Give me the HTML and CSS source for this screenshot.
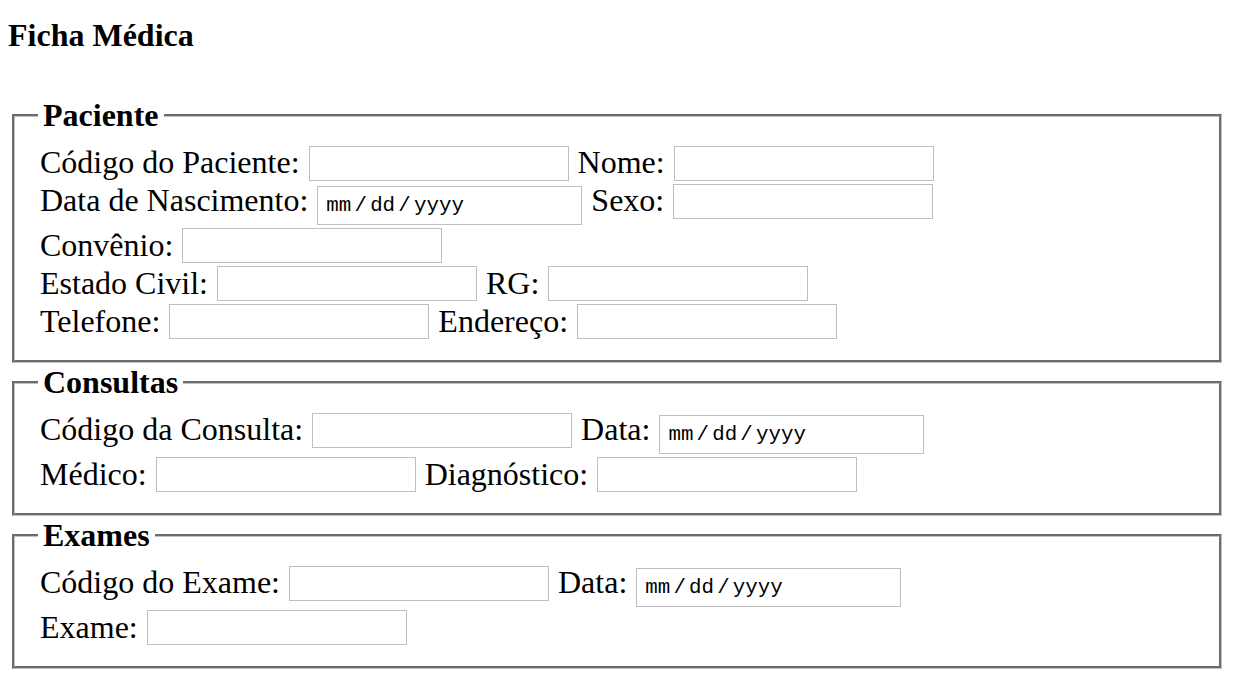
FILE: index.html
```html
<!DOCTYPE html>
<html lang="pt-BR">
<head>
<meta charset="utf-8">
<title>Ficha Médica</title>
<link rel="stylesheet" href="styles.css">
</head>
<body>
<h1 class="title">Ficha Médica</h1>
<form class="ficha">
  <fieldset class="group">
    <legend class="group-title">Paciente</legend>
    <div class="row">
      <label class="field"><span class="label">Código do Paciente:</span><input class="text" type="text"></label>
      <label class="field"><span class="label">Nome:</span><input class="text" type="text"></label>
    </div>
    <div class="row">
      <label class="field"><span class="label">Data de Nascimento:</span><input class="date" type="text" placeholder="mm / dd / yyyy"></label>
      <label class="field"><span class="label">Sexo:</span><input class="text" type="text"></label>
    </div>
    <div class="row">
      <label class="field"><span class="label">Convênio:</span><input class="text" type="text"></label>
    </div>
    <div class="row">
      <label class="field"><span class="label">Estado Civil:</span><input class="text" type="text"></label>
      <label class="field"><span class="label">RG:</span><input class="text" type="text"></label>
    </div>
    <div class="row">
      <label class="field"><span class="label">Telefone:</span><input class="text" type="text"></label>
      <label class="field"><span class="label">Endereço:</span><input class="text" type="text"></label>
    </div>
  </fieldset>
  <fieldset class="group">
    <legend class="group-title">Consultas</legend>
    <div class="row">
      <label class="field"><span class="label">Código da Consulta:</span><input class="text" type="text"></label>
      <label class="field"><span class="label">Data:</span><input class="date" type="text" placeholder="mm / dd / yyyy"></label>
    </div>
    <div class="row">
      <label class="field"><span class="label">Médico:</span><input class="text" type="text"></label>
      <label class="field"><span class="label">Diagnóstico:</span><input class="text" type="text"></label>
    </div>
  </fieldset>
  <fieldset class="group">
    <legend class="group-title">Exames</legend>
    <div class="row">
      <label class="field"><span class="label">Código do Exame:</span><input class="text" type="text"></label>
      <label class="field"><span class="label">Data:</span><input class="date" type="text" placeholder="mm / dd / yyyy"></label>
    </div>
    <div class="row">
      <label class="field"><span class="label">Exame:</span><input class="text" type="text"></label>
    </div>
  </fieldset>
</form>
</body>
</html>
```
FILE: styles.css
```css
html, body {
  background: #ffffff;
}

body {
  margin: 0 8px 8px;
  padding: 0;
  font-family: "Liberation Serif", "Times New Roman", serif;
  font-size: 32px;
  color: #000000;
}

.title {
  font-size: 32px;
  font-weight: bold;
  line-height: 37px;
  margin: 17px 0 43px;
}

.ficha {
  margin: 0;
}

.group {
  margin: 1.5px 4px 0;
  padding: 10px 25px 19px;
  border: 3px groove #c0c0c0;
  min-width: 0;
}

.group-title {
  font-weight: bold;
  line-height: 37px;
  padding: 0 5px;
  margin-left: -2px;
}

.row {
  display: flex;
  align-items: flex-start;
  column-gap: 9px;
  margin-bottom: 1px;
}

.field {
  display: flex;
  align-items: flex-start;
  column-gap: 9px;
}

.label {
  line-height: 37px;
  white-space: nowrap;
}

.text,
.date {
  box-sizing: border-box;
  margin: 0;
  border: 1px solid #bfbfbf;
  border-radius: 0;
  background: #ffffff;
  outline: none;
}

.text {
  width: 260px;
  height: 35px;
  margin-top: 1.5px;
  padding: 0;
}

.date {
  width: 265px;
  height: 38.5px;
  margin-top: 4px;
  margin-bottom: 1px;
  padding: 0 0 0 8px;
  font-family: "Liberation Mono", "Courier New", monospace;
  font-size: 20.8px;
  word-spacing: -9.3px;
  color: #000000;
}

.date::placeholder {
  color: #000000;
  opacity: 1;
}
```
